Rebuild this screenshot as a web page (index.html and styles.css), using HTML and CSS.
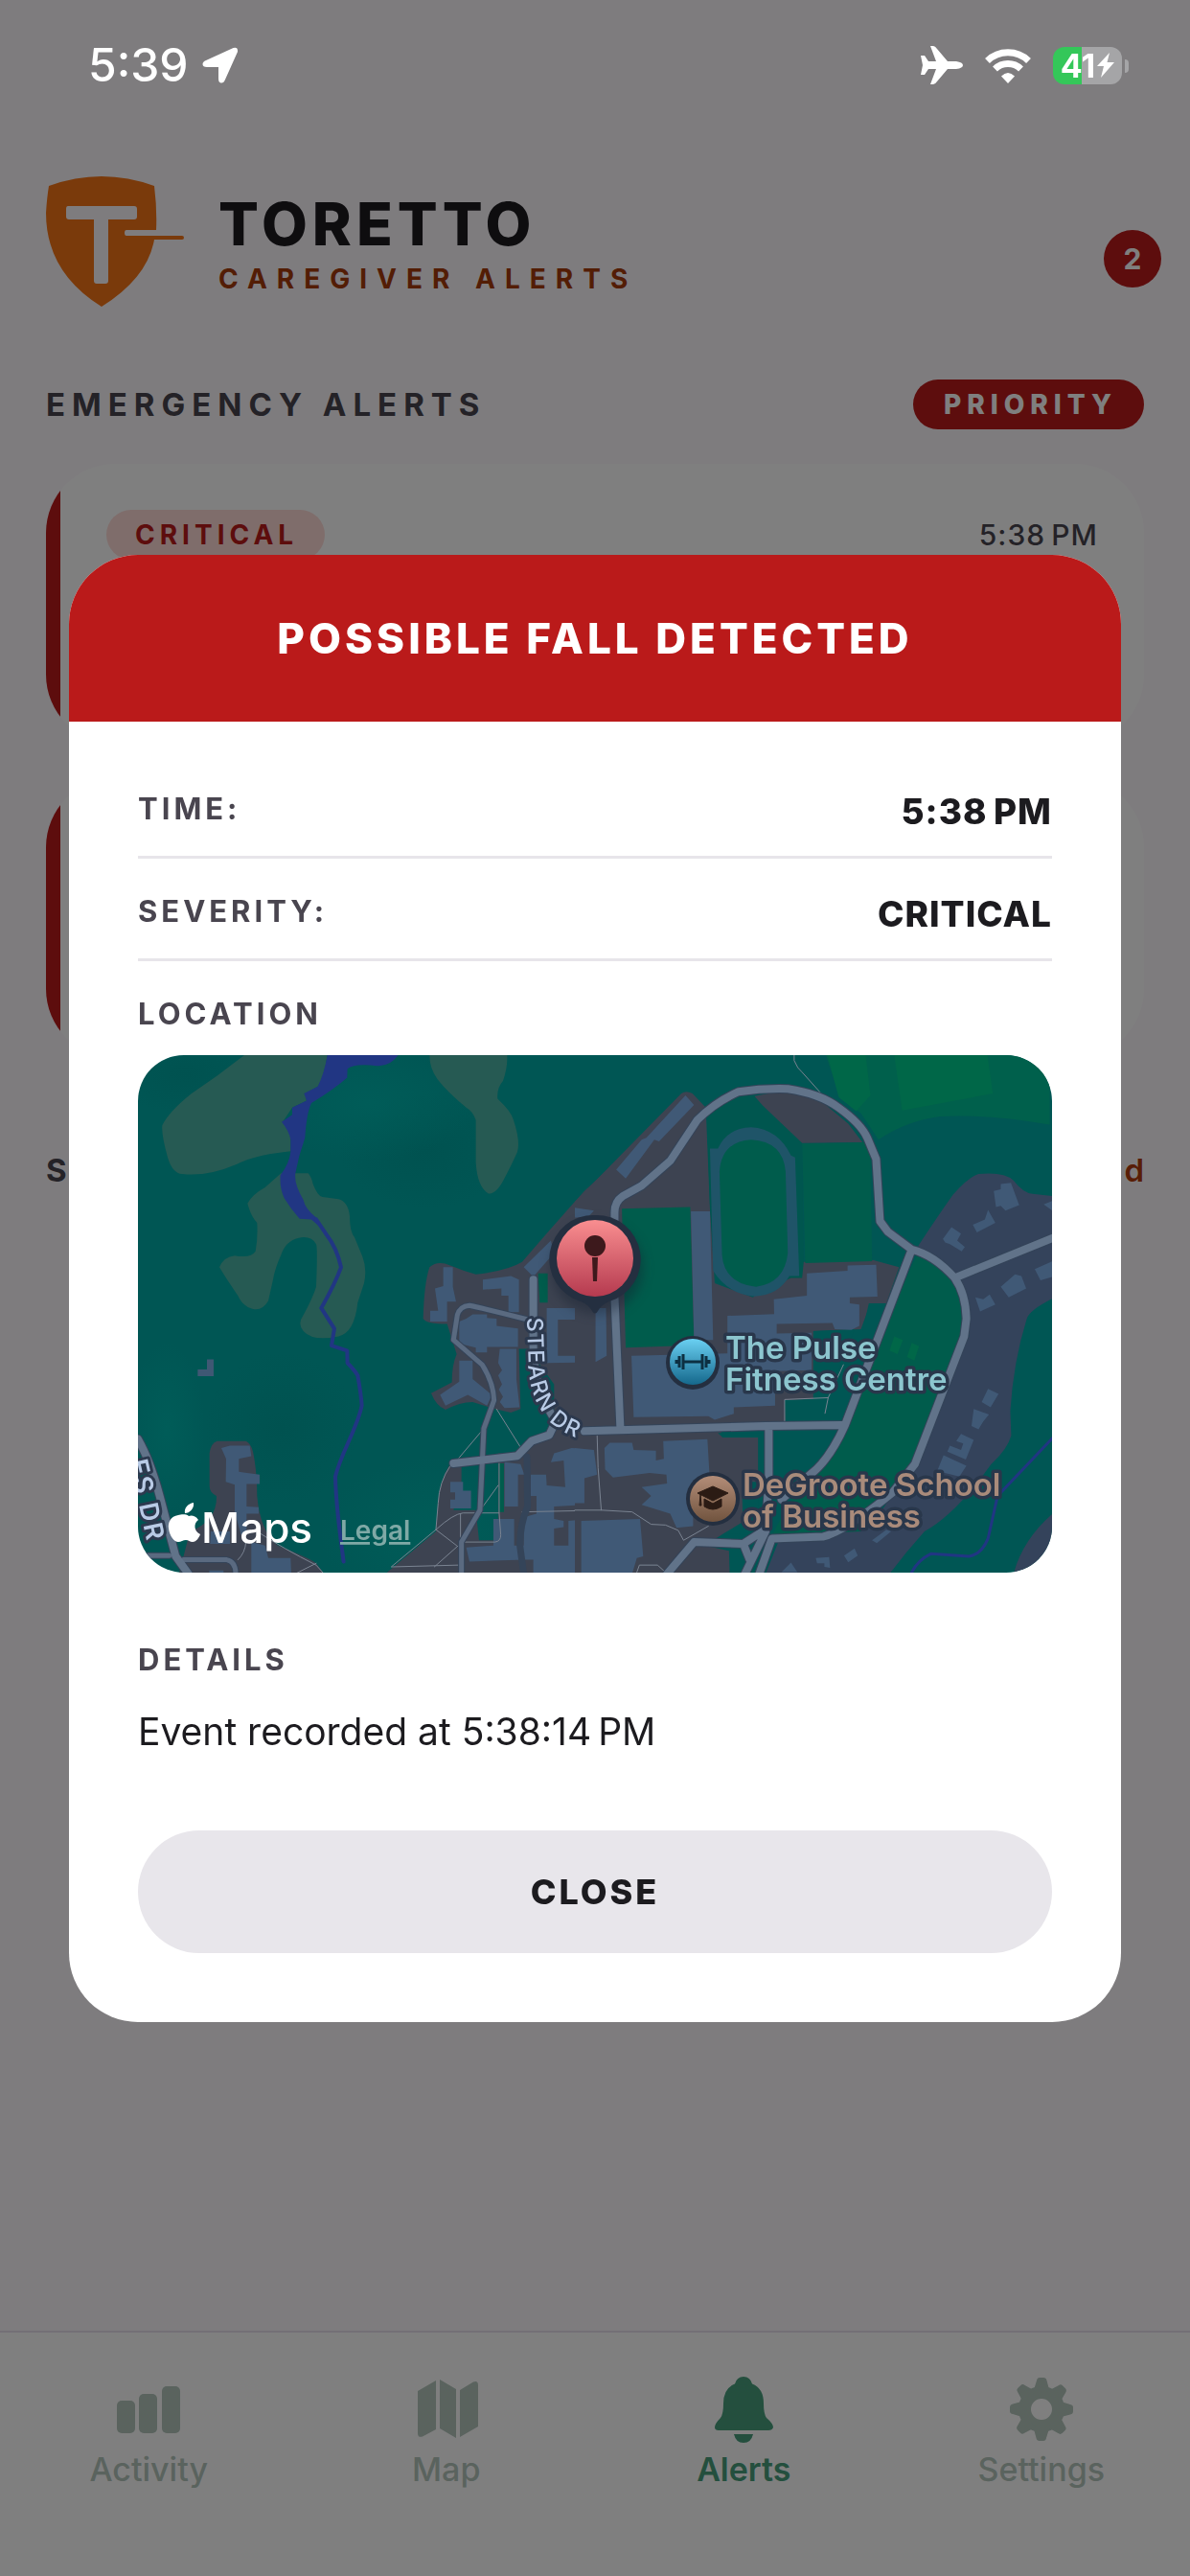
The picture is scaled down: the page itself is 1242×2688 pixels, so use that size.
FILE: index.html
```html
<!DOCTYPE html>
<html lang="en">
<head>
  <meta charset="UTF-8">
  <title>Toretto Caregiver Alerts</title>
  <meta name="viewport" content="width=device-width, initial-scale=1.0">
  <link rel="stylesheet" href="styles.css">
</head>
<body>
  <div class="status-bar">
    <div class="status-left">
      <span class="clock">5:39</span>
      <svg class="icon-location" viewBox="0 0 38 38"><path d="M32.500 1 Q37.500 -0.500 37 5 L24 34 Q22.500 38 19.500 37.500 Q17 37 17 33 V21 H5 Q0.500 21 0.500 18 Q0.500 15.500 4 14 Z" fill="#fff"/></svg>
    </div>
    <div class="status-right">
      <svg class="icon-plane" viewBox="0 0 44 40"><path d="M0 10 H4 L8 16 H16 L10 0 H13 Q15 0 17 3 L28 16 H37 Q44 17 44 20 Q44 23 37 24 H28 L17 37 Q15 40 13 40 H10 L16 24 H8 L4 30 H0 L2 20 Z" fill="#fff"/></svg>
      <svg class="icon-wifi" viewBox="0 0 48 37"><g fill="none" stroke="#fff" stroke-width="7"><path d="M2.500 13.500 A31 31 0 0 1 45.500 13.500"/><path d="M10.500 22 A19.500 19.500 0 0 1 37.500 22"/></g><path d="M24 37 L17 29.500 Q24 22.500 31 29.500 Z" fill="#fff"/></svg>
      <div class="battery">
        <span>41</span>
        <svg class="icon-bolt" viewBox="0 0 18 26"><path d="M13 0 L0 14 H7 L4 26 L18 10 H10.500 Z" fill="#fff"/></svg>
      </div>
    </div>
  </div>

  <main class="screen">
    <header class="app-header">
      <svg class="logo" viewBox="0 0 144 136">
        <path d="M3 10 Q58 -10 113 10 Q116 34 115 56 H84 Q82 56 82 59 Q82 62 84 62 H142 Q144 62 144 64 Q144 66 142 66 H113 Q106 106 58 136 Q0 100 0 38 Q1 22 3 10 Z" fill="#f47516"/>
        <path d="M23 31 H92 Q95 31 95 34 V42 Q95 45 92 45 H65 V109 Q65 112 62 112 H53 Q50 112 50 109 V45 H24 Q21 45 21 42 V34 Q21 31 23 31 Z" fill="#fdf8fd"/>
      </svg>
      <div class="brand">
        <h1>TORETTO</h1>
        <p>CAREGIVER ALERTS</p>
      </div>
      <span class="badge">2</span>
    </header>

    <div class="section-head">
      <h2>EMERGENCY ALERTS</h2>
      <span class="priority">PRIORITY</span>
    </div>

    <div class="alert-card">
      <span class="chip">CRITICAL</span>
      <span class="alert-time">5:38&#8239;PM</span>
    </div>
    <div class="alert-card"></div>

    <div class="section-head">
      <h2>S</h2>
      <a href="#" class="read-link">d</a>
    </div>
  </main>

  <nav class="tab-bar">
    <a href="#" class="tab">
      <svg viewBox="0 0 72 72"><rect x="3" y="25" width="19" height="34" rx="5"/><rect x="26" y="18" width="19" height="41" rx="5"/><rect x="50" y="10" width="19" height="49" rx="5"/></svg>
      Activity
    </a>
    <a href="#" class="tab">
      <svg viewBox="0 0 72 72"><path d="M6 15 L25 4 V55 L11 62.500 Q6 64 6 59 Z M29 3 L46 13 V64 L29 54 Z M50 14 L64 5.500 Q69 3.500 69 9 V52 L50 63 Z"/></svg>
      Map
    </a>
    <a href="#" class="tab active">
      <svg viewBox="0 0 72 72"><path d="M36 0 Q43 0 45 7.500 Q57 12 57 28 Q57 39 60 43 Q67 49 67 53 Q66 56 62 56 H10 Q6 56 6 53 Q6 49 12 43 Q15 39 15 28 Q15 12 27 7.500 Q29 0 36 0 Z M26 60 H46 Q44 69 36 69 Q28 69 26 60 Z"/></svg>
      Alerts
    </a>
    <a href="#" class="tab">
      <svg viewBox="0 0 72 72">
        <defs><path id="tooth" d="M27 17 L31 4 Q31.500 1 34 1 H38 Q41 1 41.500 4 L45 17 Z"/></defs>
        <circle cx="36" cy="34" r="17.500" fill="none" stroke="currentColor" stroke-width="13"/>
        <use href="#tooth"/><use href="#tooth" transform="rotate(45 36 34)"/><use href="#tooth" transform="rotate(90 36 34)"/><use href="#tooth" transform="rotate(135 36 34)"/><use href="#tooth" transform="rotate(180 36 34)"/><use href="#tooth" transform="rotate(225 36 34)"/><use href="#tooth" transform="rotate(270 36 34)"/><use href="#tooth" transform="rotate(315 36 34)"/>
      </svg>
      Settings
    </a>
  </nav>

  <!-- Modal -->
  <div class="overlay">
    <div class="modal" role="dialog" aria-labelledby="modalTitle">
      <h2 class="modal-title" id="modalTitle">POSSIBLE FALL DETECTED</h2>
      <div class="modal-body">
        <dl class="facts">
          <div class="fact"><dt>TIME:</dt><dd>5:38&#8239;PM</dd></div>
          <div class="fact"><dt>SEVERITY:</dt><dd>CRITICAL</dd></div>
        </dl>
        <h3 class="location-title">LOCATION</h3>

        <svg class="map" viewBox="0 0 954 540" preserveAspectRatio="xMidYMid slice">
          <defs>
            <linearGradient id="pinRed" x1="0" y1="0" x2="0" y2="1"><stop offset="0" stop-color="#f98e90"/><stop offset="1" stop-color="#b53a4f"/></linearGradient>
            <linearGradient id="pinBlue" x1="0" y1="0" x2="0" y2="1"><stop offset="0" stop-color="#6ad0f2"/><stop offset="1" stop-color="#15688c"/></linearGradient>
            <linearGradient id="pinBrown" x1="0" y1="0" x2="0" y2="1"><stop offset="0" stop-color="#b38d78"/><stop offset="1" stop-color="#71543f"/></linearGradient>
            <radialGradient id="shade"><stop offset="0" stop-color="#004e4c" stop-opacity="0.5"/><stop offset="1" stop-color="#004e4c" stop-opacity="0"/></radialGradient>
            <radialGradient id="glow"><stop offset="0" stop-color="#005f5a" stop-opacity="0.7"/><stop offset="1" stop-color="#005f5a" stop-opacity="0"/></radialGradient>
            <path id="stearn" d="M406 274 L408 332 Q412 366 434 386 Q448 398 484 408"/>
            <path id="leftRoad" d="M-14 404 Q-6 440 2 474 L18 550"/>
          </defs>
          <rect width="954" height="540" fill="#005654"/>
          <ellipse cx="50" cy="20" rx="80" ry="40" fill="url(#shade)"/>
          <ellipse cx="300" cy="100" rx="90" ry="60" fill="url(#shade)"/>
          <ellipse cx="150" cy="390" rx="80" ry="80" fill="url(#shade)"/>
          <ellipse cx="240" cy="50" rx="110" ry="60" fill="url(#glow)"/>
          <ellipse cx="310" cy="500" rx="120" ry="80" fill="url(#glow)"/>
          <ellipse cx="30" cy="390" rx="40" ry="90" fill="url(#glow)"/>

          <!-- west side: clearings, creek, campus -->
          <g class="land" transform="matrix(.3333 0 0 .37 -14 -21)">
            <g fill="#265a53">
              <path d="M375 57H635Q625 120 605 145L565 165 570 185 525 205 495 245 520 270V328Q400 340 350 365 260 400 180 392 150 390 135 345 115 280 118 255 140 215 210 165L290 115Z"/>
              <path d="M955 57H1198Q1200 90 1185 130 1165 150 1168 180 1210 215 1218 240 1240 300 1230 330 1210 370 1192 400 1165 450 1140 447 1105 430 1100 360V240Q1090 215 1070 205 1010 160 980 125 955 95 955 57Z"/>
              <path d="M385 475Q400 450 440 430L490 390H575Q585 400 590 420 605 455 620 457L670 463Q700 470 705 510 705 555 720 570L745 625Q760 660 750 700L730 755Q720 840 670 850 590 865 560 835 540 815 560 790 590 740 600 710 605 600 600 590 585 565 545 572 505 580 490 620 470 660 465 690L450 750Q430 780 400 772 370 765 355 735 320 690 297 655 310 625 345 622 395 630 410 610 418 570 415 530 395 510 385 475Z"/>
            </g>
            <path fill="#213683" d="M635 57H857Q830 90 790 87 720 80 698 95L697 120Q660 150 585 192 570 220 565 290 545 340 535 390 530 420 560 465 565 490 600 515L620 548 585 520 548 518Q520 490 500 460 485 430 488 395 515 365 520 330V295Q515 270 492 245L525 225V205L570 185 562 165 605 145Q625 110 635 57Z"/>
            <path class="line" stroke="#213683" stroke-width="4" d="M600 520L630 560Q665 600 678 655 660 700 616 770L657 828 648 876 697 890 698 925Q720 945 730 960 740 1010 743 1045 735 1080 700 1150 670 1210 660 1245 662 1330 686 1485"/>
            <path fill="#3f5874" d="M258 915H279V962H229V943H258Z"/>
            <g fill="#3d4351">
              <path d="M290 1145H380Q395 1150 402 1175 415 1230 415 1300 425 1400 480 1440 590 1480 600 1490L625 1520H170L205 1400Q290 1370 288 1300 265 1290 266 1270V1180Q270 1150 290 1145Z"/>
              <path d="M1510 382L1440 440Q1330 550 1245 640 1200 665 1100 675 1060 665 1020 650 980 635 955 655 938 700 935 800 945 815 1010 815L1040 900Q1025 930 1025 980L960 1010Q975 1045 1005 1057 1050 1035 1090 1035L1160 1055 1210 1065 1240 1055 1235 885H1265L1345 985V1100L1280 1145 1240 1180H1170V1425H1110L1100 1340H1030L1055 1260V1215L1020 1208Q985 1260 982 1320L975 1400 820 1517H1510Z"/>
            </g>
            <g fill="#405976">
              <path d="M303 1165L330 1158H392L397 1188 358 1195V1232L423 1240V1266H382V1330L420 1332V1350H382V1400L365 1410 345 1345V1268L317 1260 318 1195Z"/>
              <path d="M270 1400H330V1435H268ZM397 1430L440 1440 450 1475H520L522 1520H397ZM265 1510H310V1520H265Z"/>
              <path d="M998 655H1028V710L1038 752H1010V808H957V778H982L972 715 998 708ZM1122 690L1210 680 1235 690V782H1202V735H1180V715L1122 718Z"/>
              <path d="M1070 800L1090 788H1135V798L1165 800V820L1232 828V880H1135V895H1100V882L1048 870V808ZM1175 885H1227V970L1237 1050 1190 1052 1175 1035 1185 1020 1172 1000 1182 985 1170 960 1182 945 1170 925Z"/>
              <path d="M1048 918H1090V970L1150 1015 1135 1045 1075 1015 1005 1045 988 1015 1048 978ZM1250 655L1335 580 1345 615 1280 682ZM1425 487L1470 495V520L1420 515Z"/>
              <path fill-rule="evenodd" d="M1322 770H1495V905H1515V922L1322 925ZM1357 803V905H1472V803Z"/>
              <path d="M1190 1205L1240 1210 1252 1240H1232V1330H1190ZM1272 1240H1320L1322 1270 1380 1275 1375 1200 1335 1205 1345 1180 1400 1165 1465 1168 1475 1195 1510 1200V1220L1470 1225V1250L1442 1255V1325L1345 1330V1365L1375 1370V1388L1345 1392V1440H1510V1520H1280V1480H1250L1080 1485 1070 1445 1155 1440V1365H1220V1440H1250V1360L1290 1350V1300H1272ZM1020 1260H1060V1285H1085V1335H1020V1310H1035V1290H1020ZM1390 1370L1510 1360V1440H1390Z"/>
            </g>
            <path fill="#005c4c" d="M1295 672H1325V755H1300ZM1172 1208H1188V1345H1172Z"/>
            <g class="line" stroke="#7a8391" stroke-width="1">
              <path d="M1165 1055L1245 1170M1120 1115L1045 1195M1020 1215Q985 1260 982 1320L975 1395 1040 1440M975 1395L835 1500 1045 1495M975 1395Q1030 1350 1060 1348H1173V1208M1170 1270L1110 1345M1052 1350V1430M1060 1430H1160Q1178 1428 1178 1410L1173 1348M970 1500L1045 1440M1478 1130L1488 1340M1245 1345L1510 1340M415 1400Q500 1450 600 1495L622 1517M600 1490L540 1517M380 1430Q378 1460 355 1480"/>
            </g>
            <g class="line casing">
              <path d="M1280 690V880Q1280 990 1350 1090L1330 1128 1275 1145 1230 1187 1030 1208M1430 1112L1520 1118M42 1140Q80 1200 110 1300L160 1470 200 1520"/>
            </g>
            <g class="line casing-small">
              <path d="M1260 802Q1110 768 1080 763 1050 765 1042 790L1030 860 1120 930Q1155 980 1157 1030L1125 1110 1113 1340 1055 1430V1515M70 1468H140M185 1480H320Q348 1485 348 1520M1260 1190L1262 1330Q1238 1380 1238 1440L1250 1520"/>
            </g>
            <g class="line road-small">
              <path d="M1260 802Q1110 768 1080 763 1050 765 1042 790L1030 860 1120 930Q1155 980 1157 1030L1125 1110 1113 1340 1055 1430V1515M70 1468H140M185 1480H320Q348 1485 348 1520"/>
            </g>
            <g class="line road">
              <path d="M1280 690V880Q1280 990 1350 1090L1330 1128 1275 1145 1230 1187 1030 1208M1430 1112L1520 1118M42 1140Q80 1200 110 1300L160 1470 200 1520"/>
            </g>
          </g>

          <!-- east side: stadium, fields, houses -->
          <g class="land" transform="matrix(.3317 0 0 .37 456 -21)">
            <g fill="#3d4351">
              <path d="M0 470L335 165Q350 155 370 165L412 205 425 490 440 700 560 740 720 640 940 635 1020 655 980 757H930L900 830 750 835V1090L0 1110Z"/>
              <path d="M0 1100H450L465 1130 577 1135V1260H525L530 1400 470 1405 410 1440 485 1455 487 1520H0Z"/>
            </g>
            <path fill="#00604c" d="M790 57H1494V253Q1300 222 1150 230 1050 240 955 295L900 220 835 180Z"/>
            <path fill="#006748" d="M795 57H915L930 170 885 215 830 175ZM1005 57H1298L1315 165 1030 213Z"/>
            <path fill="#34435b" d="M1080 595Q1150 500 1190 450 1240 400 1270 392 1350 385 1380 410 1410 445 1440 448L1510 455V740Q1430 775 1422 800 1380 920 1370 1060L1373 1130Q1360 1170 1310 1210 1200 1350 1100 1400 1040 1460 990 1520H600L640 1430 780 1420 950 1360 1060 1220 1240 850Q1240 760 1195 680ZM1510 1345Q1410 1420 1380 1520H1510Z"/>
            <path fill="#00564f" d="M415 215Q500 165 565 172L590 200 715 305 720 640 715 685H680L560 735 440 660 425 480Z"/>
            <path fill="#3d4351" d="M565 172L590 198 715 305 905 303 860 250 780 190 670 155Z"/>
            <path fill="#1f5468" d="M425 320H450Q480 262 555 260 640 265 680 340L693 345 706 680H675Q640 735 565 737 480 730 435 665Z"/>
            <path fill="#005c4c" d="M455 385Q462 300 555 295 655 300 663 385L670 615Q660 700 570 710 470 700 463 620ZM148 490L363 485 375 875 160 882ZM715 307L915 303 930 340 935 638 725 643Z"/>
            <path fill="#005c4c" d="M1080 615Q1190 670 1195 700 1235 760 1225 850L1060 1200 900 1400 620 1410 700 1280 850 1100 970 820Z"/>
            <path fill="#006748" d="M1005 850L1032 860 1015 900 990 890ZM1060 868L1083 878 1068 918 1045 908Z"/>
            <path fill="#005654" d="M622 1115H835L800 1180 740 1230 622 1290ZM450 1122H600V1400H577V1135H465ZM660 1030L795 1025 880 830 750 835H905L925 757H980L855 1090H662ZM525 1375L590 1370 560 1410 470 1405Z"/>
            <g fill="#405976">
              <path d="M348 170L375 197 265 300 250 295 160 405 130 380 210 295 225 290ZM0 487L60 495 40 515H0ZM365 497H425L435 860H375Z"/>
              <path d="M480 792L627 787 626 745 730 735V672L858 665V650L948 648 952 738 865 740V757L895 760V820L870 832 818 830 810 812 635 815V842L745 840V945L630 948V1045L500 1050V1068L440 1085 420 1075 185 1078 178 905 480 898Z"/>
              <path d="M93 1165L110 1150H180L185 1170 255 1172V1200L280 1195 278 1145 417 1140 425 1260 372 1255V1385L320 1390 300 1350 210 1325 240 1300 210 1275 290 1265 288 1240 235 1235 120 1248 95 1225ZM20 1370L205 1365 215 1470 195 1475 180 1520H20ZM0 1165L60 1170 70 1240 30 1250V1320H0ZM65 770H98L100 905 65 922Z"/>
              <path d="M1318 440L1340 435V420L1372 417 1398 480 1355 495 1340 482 1325 485ZM1252 535L1290 520 1300 493 1323 530 1265 557ZM1158 575L1185 542 1215 560 1203 580 1227 598 1217 610 1180 590 1165 585ZM1475 478L1510 465V500ZM1340 710L1385 675 1405 680 1420 715 1365 740ZM1447 660L1510 635V680L1465 692ZM1260 740L1285 745 1305 732 1323 760 1275 780Z"/>
              <path d="M1300 998L1333 1012 1308 1050 1280 1035ZM1255 1055L1303 1070 1285 1090 1270 1112 1248 1103ZM1215 1125L1255 1142 1230 1197 1172 1175 1180 1158 1215 1170 1222 1152 1200 1145ZM1160 1185L1232 1215 1210 1245 1140 1230ZM935 1425L980 1395 995 1400 950 1433ZM847 1468L880 1448 890 1468 860 1487ZM758 1475L800 1472 803 1503 785 1500V1490H762ZM650 1515L680 1488 700 1515Z"/>
            </g>
            <path class="line" stroke="#213683" stroke-width="3" d="M1510 1130L1330 1300 1300 1420Q1280 1465 1240 1470L1120 1463Q1080 1480 1060 1515"/>
            <g class="line" stroke="#7a8391" stroke-width="1">
              <path d="M690 57V72Q700 95 715 105L775 165M660 1090V1028L797 1023 845 930M797 1023L787 1067M70 1130L73 1220 83 1340 180 1345 240 1380 285 1382 325 1397 342 1425 420 1385M0 1340H83M195 1515L203 1495H260L285 1515"/>
            </g>
            <g class="line casing">
              <path d="M143 1110L125 740V500Q125 470 150 455L210 425 300 355 385 240Q440 190 515 160 590 150 670 152 770 165 830 205 900 250 920 290L948 350 960 525 985 555 1060 605Q1130 620 1195 685 1230 730 1232 800L1225 850 1070 1210 1000 1290Q850 1400 780 1415L620 1420 580 1520M1060 605L850 1100Q800 1200 740 1240L650 1310M1195 685L1510 570M30 1117L600 1103 840 1100M610 1103V1250L600 1400 535 1520M290 1520L375 1430 530 1435 590 1400M530 1435L550 1480"/>
            </g>
            <g class="line road">
              <path d="M143 1110L125 740V500Q125 470 150 455L210 425 300 355 385 240Q440 190 515 160 590 150 670 152 770 165 830 205 900 250 920 290L948 350 960 525 985 555 1060 605Q1130 620 1195 685 1230 730 1232 800L1225 850 1070 1210 1000 1290Q850 1400 780 1415L620 1420 580 1520M1060 605L850 1100Q800 1200 740 1240L650 1310M1195 685L1510 570M30 1117L600 1103 840 1100M610 1103V1250L600 1400 535 1520M290 1520L375 1430 530 1435 590 1400M530 1435L550 1480"/>
            </g>
          </g>

          <text class="street"><textPath href="#stearn">STEARN DR</textPath></text>
          <text class="street street-left"><textPath href="#leftRoad" startOffset="20">ES DR</textPath></text>

          <!-- fall location pin -->
          <circle class="pin-shadow" cx="479" cy="222" r="48"/>
          <path d="M477 167 A46 46 0 0 1 492 257 Q484 260 480 267 Q477 272 474 267 Q470 260 462 257 A46 46 0 0 1 477 167 Z" fill="#242f40"/>
          <circle cx="477" cy="212" r="40" fill="url(#pinRed)"/>
          <circle cx="477" cy="199" r="11" fill="#3d191c"/>
          <path d="M474 211 H480 L479 236 H475 Z" fill="#3d191c"/>

          <circle cx="579" cy="321" r="28" fill="#242f40"/>
          <circle cx="579" cy="320" r="24" fill="url(#pinBlue)"/>
          <path d="M570 320H588M569 312V328M589 312V328M565 314V326M593 314V326M562 318V322M596 318V322" stroke="#0d3042" stroke-width="3" fill="none"/>

          <circle cx="600" cy="463" r="28" fill="#242f40"/>
          <circle cx="600" cy="463" r="24" fill="url(#pinBrown)"/>
          <path d="M600 450L616 457 600 465 584 457ZM591 463L600 468 609 463V471Q600 477 591 471ZM587 458L588 470H586Z" fill="#2b1b14" stroke="#2b1b14" stroke-width="1"/>

          <text class="poi poi-gym"><tspan x="613" y="317">The Pulse</tspan><tspan x="613" y="350">Fitness Centre</tspan></text>
          <text class="poi poi-school"><tspan x="631" y="460">DeGroote School</tspan><tspan x="631" y="493">of Business</tspan></text>

          <path fill="#fff" d="M53 481C49 478 44 480 42 480C34 481 31 488 32 494C33 502 38 508 42 508C45 508 47 506 50 506C53 506 54 508 57 508C61 508 64 503 65 500C58 497 58 488 63 485C60 480 55 480 53 481ZM49 478C48 473 52 468 58 467C59 473 54 478 49 478Z"/>
          <text class="maps-word" x="66" y="509">Maps</text>
          <a href="#"><text class="legal" x="211" y="506">Legal</text></a>
        </svg>

        <h3 class="details-title">DETAILS</h3>
        <p class="details">Event recorded at 5:38:14&#8239;PM</p>
        <button class="close-btn" type="button">CLOSE</button>
      </div>
    </div>
  </div>
</body>
</html>
```
FILE: styles.css
```css
* {
  box-sizing: border-box;
}
body {
  margin: 0;
  min-height: 100vh;
  display: flex;
  flex-direction: column;
  background-color: #fdf8fd;
  color: #1c1b1f;
  font-family: Inter, "Liberation Sans", sans-serif;
}
h1, h2, h3, p, dl, dd {
  margin: 0;
}
svg {
  display: block;
}
a {
  text-decoration: none;
}

/* status bar stays bright above the overlay */
.status-bar {
  position: relative;
  z-index: 20;
  display: flex;
  justify-content: space-between;
  align-items: center;
  height: 136px;
  padding: 0 64px 0 92px;
  color: #fff;
}
.status-left, .status-right {
  display: flex;
  align-items: center;
}
.status-left {
  gap: 14px;
}
.status-right {
  gap: 23px;
}
.clock {
  font-size: 48px;
  font-weight: 500;
  line-height: 60px;
}
.icon-location {
  width: 38px;
  height: 38px;
}
.icon-plane {
  width: 44px;
  height: 40px;
}
.icon-wifi {
  width: 48px;
  height: 37px;
}
.battery {
  position: relative;
  display: flex;
  align-items: center;
  justify-content: center;
  gap: 2px;
  width: 72px;
  height: 39px;
  margin-right: 7px;
  border-radius: 12px;
  background: linear-gradient(to right, #34c759 42%, #a5a5a7 42%);
  font-size: 34px;
  font-weight: 700;
  line-height: 39px;
}
.battery::after {
  content: "";
  position: absolute;
  right: -7px;
  top: 13px;
  width: 4px;
  height: 14px;
  border-radius: 0 4px 4px 0;
  background-color: #a5a5a7;
}
.icon-bolt {
  flex-shrink: 0;
  width: 18px;
  height: 26px;
}

.screen {
  flex: 1;
  padding: 48px 48px 0;
}
.app-header {
  position: relative;
  display: flex;
  align-items: center;
  gap: 36px;
  height: 136px;
}
.logo {
  width: 144px;
  height: 136px;
}
.brand {
  padding-top: 8px;
}
.brand h1 {
  font-size: 62px;
  font-weight: 800;
  line-height: 70px;
  letter-spacing: 5px;
}
.brand p {
  color: #a63a0a;
  font-size: 28px;
  font-weight: 700;
  line-height: 44px;
  letter-spacing: 10px;
}
.badge {
  position: absolute;
  right: -18px;
  top: 56px;
  width: 60px;
  height: 60px;
  border-radius: 50%;
  background-color: #ba1a1a;
  color: #fff;
  font-size: 30px;
  font-weight: 700;
  line-height: 60px;
  text-align: center;
}
.section-head {
  display: flex;
  justify-content: space-between;
  align-items: center;
  margin: 76px 0 36px;
}
.section-head h2 {
  color: #49454f;
  font-size: 33px;
  font-weight: 700;
  line-height: 52px;
  letter-spacing: 7px;
}
.priority {
  padding: 0 28px 0 32px;
  border-radius: 26px;
  background-color: #ba1a1a;
  color: #fff;
  font-size: 28px;
  font-weight: 800;
  line-height: 52px;
  letter-spacing: 6px;
}
.alert-card {
  display: flex;
  justify-content: space-between;
  align-items: flex-start;
  height: 292px;
  margin-bottom: 36px;
  padding: 48px 48px 0 63px;
  border-radius: 72px;
  background: linear-gradient(to right, #ba1a1a 15px, #fff 15px);
}
.alert-card + .section-head {
  margin-top: 91px;
}
.chip {
  padding: 0 28px 0 30px;
  border-radius: 26px;
  background-color: #ffdad6;
  color: #ba1a1a;
  font-size: 28px;
  font-weight: 700;
  line-height: 52px;
  letter-spacing: 5px;
}
.alert-time {
  color: #49454f;
  font-size: 30px;
  font-weight: 500;
  line-height: 52px;
  letter-spacing: 1px;
}
.read-link {
  color: #b03a0c;
  font-size: 33px;
  font-weight: 600;
  line-height: 52px;
}

.tab-bar {
  display: grid;
  grid-template-columns: repeat(4, 1fr);
  height: 256px;
  padding-top: 46px;
  border-top: 2px solid #e7e0ec;
  background-color: #fff;
}
.tab {
  display: flex;
  flex-direction: column;
  align-items: center;
  gap: 5px;
  color: #b4c6bd;
  font-size: 34px;
  font-weight: 500;
  line-height: 40px;
}
.tab svg {
  width: 72px;
  height: 72px;
  fill: currentColor;
}
.tab.active {
  color: #489e7c;
  font-weight: 600;
}

.overlay {
  position: fixed;
  inset: 0;
  z-index: 10;
  display: flex;
  align-items: center;
  justify-content: center;
  padding: 0 72px;
  background-color: rgba(0, 0, 0, 0.5);
}
.modal {
  width: 100%;
  overflow: hidden;
  border-radius: 72px;
  background-color: #fff;
}
.modal-title {
  padding: 60px 72px;
  background-color: #ba1a1a;
  color: #fff;
  font-size: 44px;
  font-weight: 800;
  line-height: 54px;
  letter-spacing: 4px;
  text-align: center;
}
.modal-body {
  display: flex;
  flex-direction: column;
  padding: 36px 72px 72px;
}
.fact {
  display: flex;
  justify-content: space-between;
  align-items: flex-start;
  padding: 32px 0 20px;
  border-bottom: 3px solid #e7e5ea;
}
.fact dt,
.location-title,
.details-title {
  color: #49454f;
  font-size: 31px;
  font-weight: 700;
  line-height: 46px;
  letter-spacing: 4px;
}
.fact dd {
  font-size: 37px;
  font-weight: 800;
  line-height: 52px;
  letter-spacing: 1px;
}
.location-title {
  margin: 32px 0 20px;
}
.map {
  width: 100%;
  height: 540px;
  border-radius: 48px;
}
.details-title {
  margin: 68px 0 22px;
}
.details {
  font-size: 39px;
  line-height: 60px;
}
.close-btn {
  margin-top: 73px;
  padding: 0;
  border: none;
  border-radius: 64px;
  background-color: #e8e6eb;
  color: #1c1b1f;
  font-family: inherit;
  font-size: 36px;
  font-weight: 800;
  line-height: 128px;
  letter-spacing: 3px;
  cursor: pointer;
}

/* map drawing */
.line {
  fill: none;
  stroke-linejoin: round;
  stroke-linecap: round;
}
.line, .line path {
  vector-effect: non-scaling-stroke;
}
.casing {
  stroke: #344459;
  stroke-width: 10px;
}
.road {
  stroke: #617389;
  stroke-width: 8px;
}
.casing-small {
  stroke: #344459;
  stroke-width: 7px;
}
.road-small {
  stroke: #5a6a80;
  stroke-width: 5px;
}
.street {
  fill: #b9cbe6;
  stroke: #2c394e;
  stroke-width: 6px;
  stroke-linejoin: round;
  paint-order: stroke;
  font-size: 23px;
  font-weight: 500;
  letter-spacing: 2px;
}
.street-left {
  font-size: 27px;
  font-weight: 600;
}
.pin-shadow {
  fill: rgba(20, 30, 45, 0.4);
  filter: blur(6px);
}
.poi {
  stroke: #29374b;
  stroke-width: 7px;
  stroke-linejoin: round;
  paint-order: stroke;
  font-size: 33px;
  font-weight: 600;
}
.poi-gym {
  fill: #8cc6cf;
}
.poi-school {
  fill: #a98b7b;
}
.maps-word {
  fill: #fff;
  font-size: 44px;
  font-weight: 500;
}
.legal {
  fill: #7fa9a6;
  font-size: 28px;
  font-weight: 600;
  text-decoration: underline;
}
```
